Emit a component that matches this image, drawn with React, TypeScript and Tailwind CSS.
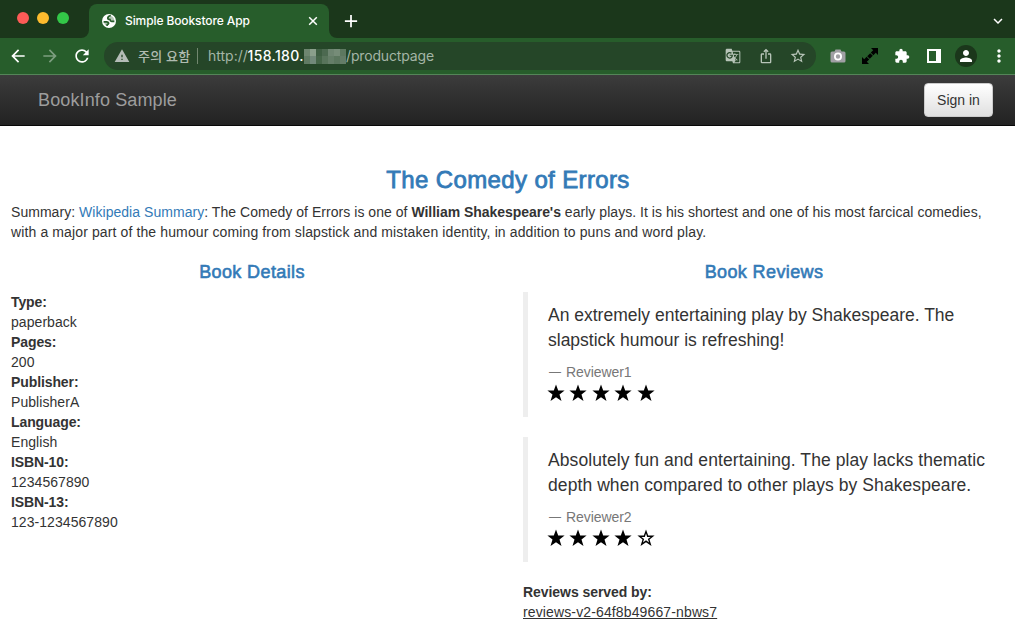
import React from 'react';
import {
  MdArrowBack, MdArrowForward, MdRefresh, MdAdd, MdWarning,
  MdGTranslate, MdIosShare, MdStarBorder, MdExtension, MdPerson, MdMoreVert,
  MdKeyboardArrowDown,
} from 'react-icons/md';

const uiFont = "font-['Inter','Noto_Sans_CJK_KR',sans-serif]";

function TabStrip() {
  return (
    <div className="flex h-[38px] bg-[#1b371b]">
      <div className="flex w-[81px] gap-2 pl-[17px] pt-[11.5px]">
        <span className="size-3 rounded-full bg-[#fc5b57]" />
        <span className="size-3 rounded-full bg-[#fdbb2e]" />
        <span className="size-3 rounded-full bg-[#33c748]" />
      </div>
      <svg viewBox="0 0 8 8" className="size-2 self-end fill-[#275d2b]"><path d="M8 0v8H0a8 8 0 0 0 8-8z" /></svg>
      <div className="mt-1 flex h-[34px] w-[240px] items-center rounded-t-lg bg-[#275d2b] pl-[13px] text-white">
        <svg viewBox="0 0 14 14" className="size-[14px]">
          <circle cx="7" cy="7" r="7" fill="white" />
          <path d="M8.800 1.500Q5.800 2 5.800 4.200Q5.800 5.400 8 5.500Q8.200 7.300 9.600 7.300H12.400M1.600 7.800H4.600Q6.600 8 6.600 9.600Q6.400 10.300 5.200 10.600V12" fill="none" stroke="#275d2b" strokeWidth="1.700" />
          <path d="M8.500 1.800Q12.200 3 12.300 6.800L10 7.500 8.400 5.300 6.200 4.700zM1.800 8.200L4.800 8.300 6.400 9.500 5 12Q2.500 11 1.800 8.200z" fill="#275d2b" fillOpacity=".35" />
        </svg>
        <span className="ml-[9px] flex-1 whitespace-nowrap text-[12px] font-medium tracking-[-0.1px]">Simple Bookstore App</span>
        <svg viewBox="0 0 12 12" className="mr-[10px] size-3 stroke-white"><path d="M2.200 2.200l7.600 7.600M9.800 2.200l-7.600 7.600" strokeWidth="1.500" /></svg>
      </div>
      <svg viewBox="0 0 8 8" className="size-2 self-end fill-[#275d2b]"><path d="M0 0v8h8a8 8 0 0 1-8-8z" /></svg>
      <MdAdd className="ml-[4px] mt-[11px] size-5 stroke-white text-white [stroke-width:0] scale-105" />
      <MdKeyboardArrowDown className="ml-auto mr-[8px] mt-3 size-[18px] text-white" />
    </div>
  );
}

function Toolbar() {
  return (
    <div className="flex h-[37px] items-center border-b border-[#548558] bg-[#275d2b] text-white">
      <MdArrowBack className="ml-2 size-5" />
      <MdArrowForward className="ml-3 size-5 text-[#7d9e80]" />
      <MdRefresh className="ml-3 size-5" />
      <div className="ml-3 flex h-7 w-[712px] items-center rounded-full bg-[#254628] pl-[10px] text-[14px]">
        <MdWarning className="size-4 text-[#b4bcb7]" />
        <span className="ml-[8px] w-[52px] whitespace-nowrap text-[13px] font-medium tracking-[0.2px] text-[#b0bbb1]">주의 요함</span>
        <span className="ml-[7px] h-4 w-px bg-[#71876f]" />
        <span className="ml-[10px] w-[39.5px] text-[#a4b5a6]">http://</span>
        <span className="w-[56.5px] font-medium tracking-[0.35px] text-white">158.180.</span>
        <span className="grid h-[15px] w-[42px] grid-cols-7 grid-rows-2">
          <i className="bg-[#6e8670]" /><i className="bg-[#8a9f8b]" /><i className="bg-[#3e5e42]" /><i className="bg-[#4c6950]" /><i className="bg-[#6e8571]" /><i className="bg-[#768c78]" /><i className="bg-[#5d7860]" />
          <i className="bg-[#607b64]" /><i className="bg-[#72897a]" /><i className="bg-[#456548]" /><i className="bg-[#58745b]" /><i className="bg-[#657e68]" /><i className="bg-[#5c775f]" /><i className="bg-[#647c67]" />
        </span>
        <span className="tracking-[-0.15px] text-[#a4b5a6]">/productpage</span>
        <div className="ml-auto mr-[10px] flex gap-4 text-[#b7c4b8]">
          <MdGTranslate className="size-4 -translate-x-px" />
          <MdIosShare className="size-4" />
          <MdStarBorder className="size-4 scale-110" />
        </div>
      </div>
      <div className="ml-[14px] flex items-center">
        <svg viewBox="0 0 16 16" className="size-4">
          <path fill="#a0a0a4" d="M2 3.500h2.500L5.500 1.500h5l1 2H14q1.500 0 1.500 1.500v8q0 1.500-1.500 1.500H2Q.500 14.500.500 13V5Q.500 3.500 2 3.500z" />
          <circle cx="8" cy="8.500" r="3.100" fill="#a0a0a4" stroke="white" strokeWidth="1.800" />
        </svg>
        <svg viewBox="0 0 16 16" className="ml-4 size-4 fill-black"><path d="M9 0h7v7l-2.200-2.200-2.400 2.400-2.600-2.600L11.200 2.200zM0 9l2.200 2.200 2.400-2.400 2.600 2.600-2.400 2.400L7 16H0zM8.200 5.200l2.600 2.600-3 3-2.600-2.600z" /></svg>
        <MdExtension className="ml-4 size-4" />
        <svg viewBox="0 0 14 14" className="ml-[17px] size-[14px]" fill="white"><path fillRule="evenodd" d="M0 0h14v14H0zM2 2v10h7V2z" /></svg>
        <span className="ml-[14px] flex size-[22px] items-center justify-center rounded-full bg-[#1b371b]"><MdPerson className="size-[18px]" /></span>
        <MdMoreVert className="ml-[11.5px] size-5" />
      </div>
    </div>
  );
}

function Navbar() {
  return (
    <nav className="flex h-[51px] items-center justify-between border-b border-[#080808] bg-linear-to-b from-[#3c3c3c] to-[#222222] pl-[38px] pr-[22px]">
      <span className="text-[18px] tracking-[0.12px] text-[#9d9d9d]">BookInfo Sample</span>
      <button className="h-[34px] w-[69px] rounded border border-[#cccccc] bg-linear-to-b from-white to-[#e0e0e0] text-[14px] text-[#333333]">Sign in</button>
    </nav>
  );
}

const details = [
  ['Type:', 'paperback'],
  ['Pages:', '200'],
  ['Publisher:', 'PublisherA'],
  ['Language:', 'English'],
  ['ISBN-10:', '1234567890'],
  ['ISBN-13:', '123-1234567890'],
];

const starPath = 'M8-.4l2.200 6h6.400l-5.100 3.900 2 6.500L8 12.300 2.500 16l2-6.500L-.600 5.600h6.400z';

function Star({ filled }: { filled: boolean }) {
  return (
    <svg viewBox="0 0 16 16" className="size-4 overflow-visible fill-black">
      <path fillRule="evenodd" d={filled ? starPath : starPath + 'M8 3.600L6.800 7H3.400l2.700 2L5 12.400 8 10.300l3 2.100L9.900 9l2.700-2H9.200z'} />
    </svg>
  );
}

function Review({ lines, reviewer, rating }: { lines: string[]; reviewer: string; rating: number }) {
  return (
    <blockquote className="mb-5 h-[125px] border-l-[5px] border-[#eeeeee] pl-5 pt-[11px]">
      {lines.map((line) => (
        <p key={line} className={'whitespace-nowrap text-[17.5px] leading-[25px] ' + (rating === 5 ? '' : 'tracking-[0.08px]')}>{line}</p>
      ))}
      <div className="mt-[9px] flex text-[14px] leading-5 tracking-[-0.08px] text-[#777777]">
        <span className="flex w-[18px] items-center pl-px text-[12px]">—</span>{reviewer}
      </div>
      <div className="mt-[3px] flex gap-[6.4px]">
        {[1, 2, 3, 4, 5].map((n) => <Star key={n} filled={n <= rating} />)}
      </div>
    </blockquote>
  );
}

const heading = 'text-center font-normal text-[#337ab7]';
const subheading = heading + ' mb-[10px] text-[18px] leading-5 tracking-[0.38px] [-webkit-text-stroke:0.6px_#337ab7]';

export default function App() {
  return (
    <div className="h-[633px] w-[1015px] overflow-hidden bg-white font-['Liberation_Sans',Arial,sans-serif] text-[14px] leading-5 text-[#333333]">
      <header className={uiFont}>
        <TabStrip />
        <Toolbar />
      </header>
      <Navbar />
      <main className="px-[11px] pt-[41px]">
        <h3 className={heading + ' pl-px text-[24px] leading-[26px] tracking-[0.37px] [-webkit-text-stroke:0.8px_#337ab7]'}>The Comedy of Errors</h3>
        <div className="mt-[9px] whitespace-nowrap">
          <p className="tracking-[0.04px]">Summary: <a className="text-[#337ab7]">Wikipedia Summary</a>: The Comedy of Errors is one of <b className="tracking-[-0.04px]">William Shakespeare's</b> early plays. It is his shortest and one of his most farcical comedies,</p>
          <p className="tracking-[0.12px]">with a major part of the humour coming from slapstick and mistaken identity, in addition to puns and word play.</p>
        </div>
        <div className="mt-5 grid grid-cols-[482px_482px] gap-[30px]">
          <section>
            <h4 className={subheading}>Book Details</h4>
            <dl>
              {details.map(([name, value]) => (
                <React.Fragment key={name}><dt className="font-bold tracking-[-0.1px]">{name}</dt><dd className="tracking-[0.06px]">{value}</dd></React.Fragment>
              ))}
            </dl>
          </section>
          <section>
            <h4 className={subheading}>Book Reviews</h4>
            <Review lines={['An extremely entertaining play by Shakespeare. The', 'slapstick humour is refreshing!']} reviewer="Reviewer1" rating={5} />
            <Review lines={['Absolutely fun and entertaining. The play lacks thematic', 'depth when compared to other plays by Shakespeare.']} reviewer="Reviewer2" rating={4} />
            <div className="font-bold tracking-[-0.06px]">Reviews served by:</div>
            <u className="tracking-[0.13px]">reviews-v2-64f8b49667-nbws7</u>
          </section>
        </div>
      </main>
    </div>
  );
}
